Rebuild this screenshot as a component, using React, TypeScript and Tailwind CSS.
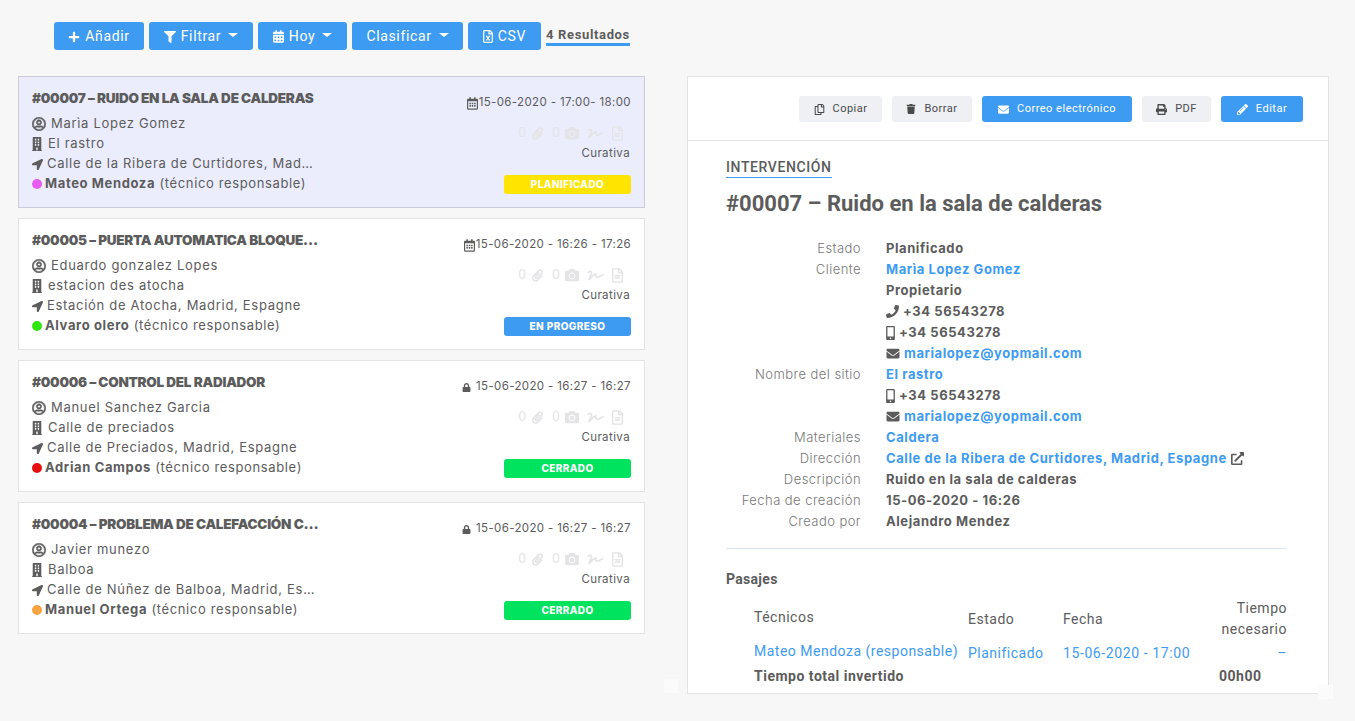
import React from 'react';
import {
  FaPlus, FaFilter, FaRegCalendarAlt, FaRegFileExcel, FaRegUserCircle, FaBuilding, FaLocationArrow,
  FaPaperclip, FaCamera, FaSignature, FaRegFileAlt, FaRegCopy, FaTrash, FaEnvelope, FaPrint, FaPencilAlt,
  FaPhone, FaMobileAlt, FaExternalLinkAlt, FaLock, FaCalendarAlt,
} from 'react-icons/fa';

const work = 'font-["Inter","Liberation_Sans",sans-serif]';
const plex = 'font-["Roboto","Liberation_Sans",sans-serif]';

const Caret = () => <span className="ml-[2px] mb-[3px] inline-block h-0 w-0 border-x-[5px] border-t-[4px] border-x-transparent border-t-white" />;

const ToolBtn = ({ icon, label, caret, className }: { icon?: React.ReactNode; label: string; caret?: boolean; className: string }) => (
  <button className={`flex h-7 items-center justify-center gap-[5px] rounded-[3px] bg-[#3e9bf2] pt-[1px] text-[14px] tracking-[0.65px] text-white ${className}`}>
    {icon}
    <span>{label}</span>
    {caret && <Caret />}
  </button>
);

type Job = {
  title: string;
  lock?: boolean;
  date: string;
  client: string;
  site: string;
  address: string;
  tech: string;
  dot: string;
  status: string;
  badge: string;
  active?: boolean;
};

const jobs: Job[] = [
  { title: '#00007 – Ruido en la sala de calderas', date: '15-06-2020 - 17:00- 18:00', client: 'Marìa Lopez Gomez', site: 'El rastro', address: 'Calle de la Ribera de Curtidores, Madrid, Espagne', tech: 'Mateo Mendoza', dot: 'bg-[#e65cf0]', status: 'PLANIFICADO', badge: 'bg-[#ffe400]', active: true },
  { title: '#00005 – Puerta automatica bloqueada en el garaje', date: '15-06-2020 - 16:26 - 17:26', client: 'Eduardo gonzalez Lopes', site: 'estacion des atocha', address: 'Estación de Atocha, Madrid, Espagne', tech: 'Alvaro olero', dot: 'bg-[#2fe60f]', status: 'EN PROGRESO', badge: 'bg-[#3e9bf2]' },
  { title: '#00006 – Control del radiador', lock: true, date: '15-06-2020 - 16:27 - 16:27', client: 'Manuel Sanchez Garcia', site: 'Calle de preciados', address: 'Calle de Preciados, Madrid, Espagne', tech: 'Adrian Campos', dot: 'bg-[#e60f0f]', status: 'CERRADO', badge: 'bg-[#00e35f]' },
  { title: '#00004 – Problema de calefacción central del edificio', lock: true, date: '15-06-2020 - 16:27 - 16:27', client: 'Javier munezo', site: 'Balboa', address: 'Calle de Núñez de Balboa, Madrid, Espagne', tech: 'Manuel Ortega', dot: 'bg-[#f7a340]', status: 'CERRADO', badge: 'bg-[#00e35f]' },
];

const JobCard = ({ job }: { job: Job }) => (
  <div className={`flex h-[132px] justify-between border px-[13px] ${work} text-[#5c5c5c] ${job.active ? 'border-[#c9ccd6] bg-[#ebedfd]' : 'border-[#e3e3e3] bg-white'}`}>
    <div className="w-[283px] pt-[11px]">
      <div className="h-[20px] w-[288px] truncate text-[13.5px] font-black uppercase leading-[20px] tracking-[-0.25px]">{job.title}</div>
      <div className="mt-[6px] flex h-5 items-center gap-[5px] text-[13px] tracking-[0.7px]">
        <FaRegUserCircle className="h-[14px] w-[14px] shrink-0" stroke="currentColor" strokeWidth={20} />
        <span className="truncate">{job.client}</span>
      </div>
      <div className="flex h-5 items-center gap-[6px] text-[13px] tracking-[0.7px]">
        <FaBuilding className="h-[14px] w-[10px] shrink-0" preserveAspectRatio="none" />
        <span className="truncate">{job.site}</span>
      </div>
      <div className="flex h-5 items-center gap-[4px] text-[13px] tracking-[0.7px]">
        <FaLocationArrow className="h-[11px] w-[11px] shrink-0" />
        <span className="truncate">{job.address}</span>
      </div>
      <div className="flex h-5 items-center gap-[3px] text-[13px] tracking-[0.63px]">
        <span className={`h-[10px] w-[10px] shrink-0 rounded-full ${job.dot}`} />
        <span className="truncate"><b className="font-bold">{job.tech}</b> (técnico responsable)</span>
      </div>
    </div>
    <div className="flex flex-col items-end pt-[16px]">
      <div className="flex h-5 items-center gap-[1px] text-[11.5px] tracking-[0.36px]">
        {job.lock
          ? <FaLock className="mr-[4px] h-[9px] w-[9px]" />
          : <FaRegCalendarAlt className="h-[13px] w-[11px]" />}
        <span>{job.date}</span>
      </div>
      <div className="mr-[8px] mt-[10px] flex h-5 items-center text-[12.5px] text-[#e4e4e6]">
        <span>0</span>
        <FaPaperclip className="ml-[6px] h-[15px] w-[11px]" />
        <span className="ml-[9px]">0</span>
        <FaCamera className="ml-[5px] h-[14px] w-[14px]" />
        <FaSignature className="ml-[8px] h-[13px] w-[17px]" />
        <FaRegFileAlt className="ml-[8px] h-[15px] w-[11px]" />
      </div>
      <div className="mr-[1px] mt-[1px] h-5 text-[11.5px] leading-[18px] tracking-[0.4px]">Curativa</div>
      <div className={`mt-[11px] flex h-[19px] w-[127px] items-center justify-center rounded-[3px] text-[10px] font-extrabold tracking-[0.4px] text-white ${job.badge}`}>
        {job.status}
      </div>
    </div>
  </div>
);

const ActionBtn = ({ icon, label, blue, className }: { icon: React.ReactNode; label: string; blue?: boolean; className: string }) => (
  <button className={`flex h-[26px] items-center justify-center gap-2 rounded-[3px] text-[11px] tracking-[0.5px] ${blue ? 'bg-[#3e9bf2] text-white' : 'bg-[#eef0f4] text-[#4a4a4a]'} ${className}`}>
    {icon}
    <span>{label}</span>
  </button>
);

const Row = ({ label, children }: { label?: string; children: React.ReactNode }) => (
  <div className="flex h-[21px] items-center">
    <div className="w-[135px] shrink-0 text-right font-light tracking-[0.45px] text-[#777777]">{label}</div>
    <div className="ml-[25px] flex items-center gap-[4px] whitespace-nowrap font-bold tracking-[0.57px] text-[#5c5c5c]">{children}</div>
  </div>
);

const Link = ({ children }: { children: React.ReactNode }) => <span className="text-[#3e9bf2]">{children}</span>;

export default function App() {
  return (
    <div className="relative h-[721px] w-[1355px] overflow-hidden bg-[#f7f7f7]">
      <div className={`ml-[54px] flex gap-[5px] pt-[22px] ${plex}`}>
        <ToolBtn className="w-[90px]" icon={<FaPlus className="h-[12px] w-[12px]" />} label="Añadir" />
        <ToolBtn className="w-[104px]" icon={<FaFilter className="h-[12px] w-[12px]" />} label="Filtrar" caret />
        <ToolBtn className="w-[89px]" icon={<FaCalendarAlt className="h-[13px] w-[11px]" />} label="Hoy" caret />
        <ToolBtn className="w-[111px]" label="Clasificar" caret />
        <ToolBtn className="w-[73px]" icon={<FaRegFileExcel className="h-[13px] w-[10px]" />} label="CSV" />
        <div className="h-[24px] border-b-[3px] border-[#3e9bf2] text-[13px] font-bold leading-[26px] tracking-[0.65px] text-[#5c5c5c]">4 Resultados</div>
      </div>

      <div className="mt-[26px] flex items-start pl-[18px]">
        <div className="flex w-[627px] shrink-0 flex-col gap-[10px]">
          {jobs.map((j) => <JobCard key={j.title} job={j} />)}
        </div>

        <div className="ml-[42px] h-[618px] w-[642px] shrink-0 overflow-hidden border border-[#e3e3e3] bg-white">
          <div className={`flex h-[64px] justify-end gap-[10px] border-b border-[#e3e3e3] pr-[25px] pt-[19px] ${plex}`}>
            <ActionBtn className="w-[83px]" icon={<FaRegCopy className="h-[11px] w-[11px]" />} label="Copiar" />
            <ActionBtn className="w-[80px]" icon={<FaTrash className="h-[10px] w-[10px]" />} label="Borrar" />
            <ActionBtn blue className="w-[150px]" icon={<FaEnvelope className="h-[11px] w-[11px]" />} label="Correo electrónico" />
            <ActionBtn className="w-[69px]" icon={<FaPrint className="h-[11px] w-[11px]" />} label="PDF" />
            <ActionBtn blue className="w-[82px]" icon={<FaPencilAlt className="h-[11px] w-[11px]" />} label="Editar" />
          </div>

          <div className="pl-[38px] pr-[41px]">
            <div className={`mt-[16px] inline-block h-[21px] border-b border-[#3e9bf2] text-[14px] font-medium leading-[20px] tracking-[0.6px] text-[#5c5c5c] ${plex}`}>INTERVENCIÓN</div>
            <div className={`mt-[12px] h-[28px] text-[22px] font-bold leading-[28px] text-[#5c5c5c] ${plex}`}>#00007 – Ruido en la sala de calderas</div>

            <div className={`mt-[20px] text-[13px] ${work}`}>
              <Row label="Estado">Planificado</Row>
              <Row label="Cliente"><Link>Marìa Lopez Gomez</Link></Row>
              <Row>Propietario</Row>
              <Row><FaPhone className="h-[13px] w-[13px]" />+34 56543278</Row>
              <Row><FaMobileAlt className="h-[14px] w-[9px]" />+34 56543278</Row>
              <Row><FaEnvelope className="h-[13px] w-[14px]" /><Link>marialopez@yopmail.com</Link></Row>
              <Row label="Nombre del sitio"><Link>El rastro</Link></Row>
              <Row><FaMobileAlt className="h-[14px] w-[9px]" />+34 56543278</Row>
              <Row><FaEnvelope className="h-[13px] w-[14px]" /><Link>marialopez@yopmail.com</Link></Row>
              <Row label="Materiales"><Link>Caldera</Link></Row>
              <Row label="Dirección"><Link>Calle de la Ribera de Curtidores, Madrid, Espagne</Link><FaExternalLinkAlt className="h-[13px] w-[13px]" /></Row>
              <Row label="Descripción">Ruido en la sala de calderas</Row>
              <Row label="Fecha de creación">15-06-2020 - 16:26</Row>
              <Row label="Creado por">Alejandro Mendez</Row>
            </div>

            <div className="mt-[16px] border-t border-[#d5e7f8]" />

            <div className={`mt-[20px] text-[14px] font-bold leading-[20px] tracking-[0.3px] text-[#5c5c5c] ${plex}`}>Pasajes</div>

            <table className={`mt-[9px] w-[561px] table-fixed text-[14px] tracking-[0.5px] text-[#5c5c5c] ${plex}`}>
              <colgroup>
                <col className="w-[28px]" />
                <col className="w-[214px]" />
                <col className="w-[95px]" />
                <col className="w-[150px]" />
                <col />
              </colgroup>
              <tbody>
                <tr className="h-[42px]">
                  <td />
                  <td className="pb-[4px] font-normal">Técnicos</td>
                  <td>Estado</td>
                  <td>Fecha</td>
                  <td className="text-right leading-[21px]">Tiempo necesario</td>
                </tr>
                <tr className="h-[24px] text-[#3e9bf2]">
                  <td />
                  <td className="whitespace-nowrap pb-[2px]">Mateo Mendoza (responsable)</td>
                  <td className="pt-[2px]">Planificado</td>
                  <td className="pt-[2px] tracking-[0.6px]">15-06-2020 - 17:00</td>
                  <td className="pt-[2px] text-right">–</td>
                </tr>
                <tr className="h-[24px] font-bold">
                  <td />
                  <td colSpan={3}>Tiempo total invertido</td>
                  <td className="pl-[6px]">00h00</td>
                </tr>
              </tbody>
            </table>
          </div>
        </div>
      </div>

      <div className="absolute left-[664px] top-[679px] h-[14px] w-[14px] bg-[#fbfbfb]" />
      <div className="absolute left-[1318px] top-[685px] h-[14px] w-[15px] bg-[#fbfbfb]" />
    </div>
  );
}
